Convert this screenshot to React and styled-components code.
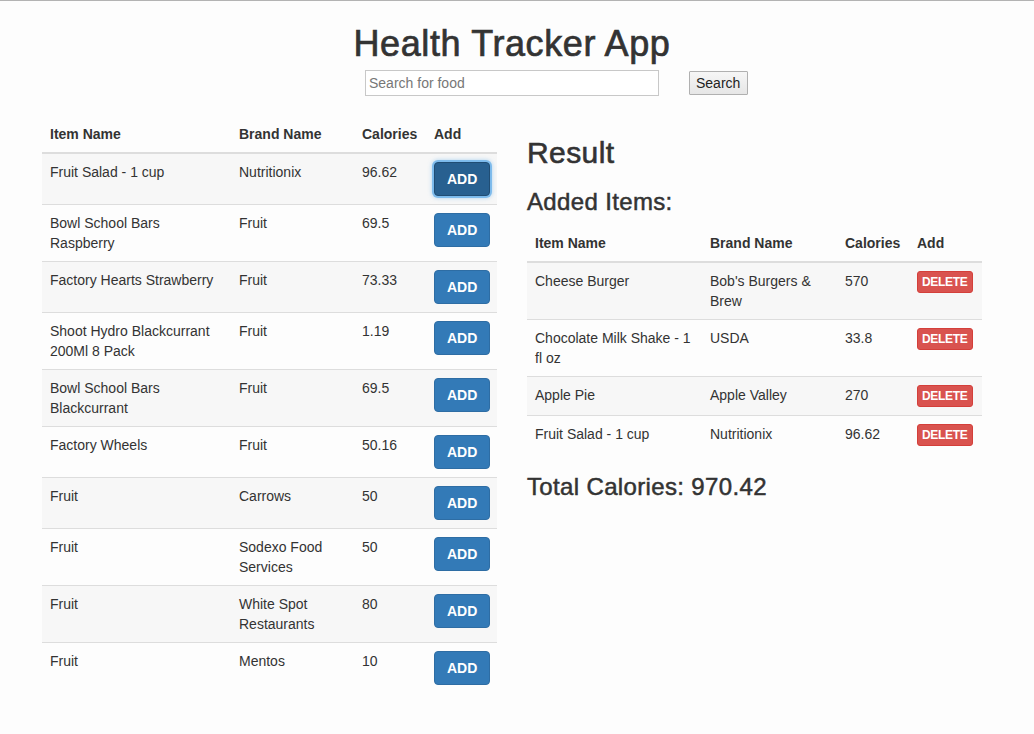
import React from "react";
import styled, { createGlobalStyle } from "styled-components";

const Global = createGlobalStyle`
  html, body { margin: 0; padding: 0; background: #fdfdfd; }
  body {
    font-family: "Liberation Sans", Arial, sans-serif;
    font-size: 14px;
    line-height: 20px;
    color: #333;
    border-top: 1px solid #b3b3b3;
    min-height: 733px;
  }
  * { box-sizing: border-box; }
`;

const Page = styled.div`
  width: 1024px;
`;

const Title = styled.h1`
  margin: 20px 0 6px;
  padding-top: 3px;
  font-size: 36px;
  font-weight: 500;
  line-height: 1.1;
  text-align: center;
  letter-spacing: 0.6px;
  -webkit-text-stroke: 0.7px #333;
`;

const SearchForm = styled.form`
  display: grid;
  grid-template-columns: 1fr 294px 1fr;
  align-items: center;
  margin-bottom: 20px;
`;

const SearchInput = styled.input`
  grid-column: 2;
  height: 26px;
  border: 1px solid #c8c8c8;
  background: #fff;
  padding: 0 3px;
  font-family: "Liberation Sans", Arial, sans-serif;
  font-size: 14px;
  color: #333;
  &::placeholder { color: #777; }
`;

const SearchButton = styled.button`
  grid-column: 3;
  justify-self: start;
  margin-left: 30px;
  height: 24px;
  padding: 0 7px 0 6px;
  border: 1px solid #b0b0b0;
  border-radius: 1px;
  background: linear-gradient(#f6f6f6, #e6e6e6);
  font-family: "Liberation Sans", Arial, sans-serif;
  font-size: 14px;
  color: #222;
`;

const Columns = styled.div`
  display: flex;
  gap: 30px;
  padding-left: 42px;
`;

const Column = styled.div`
  width: 455px;
`;

const H2 = styled.h2`
  margin: 20px 0 10px;
  font-size: 30px;
  font-weight: 500;
  line-height: 1.1;
  letter-spacing: 0.4px;
  -webkit-text-stroke: 0.6px #333;
`;

const H3 = styled.h3`
  margin: 20px 0 10px;
  font-size: 24px;
  font-weight: 500;
  line-height: 1.1;
  letter-spacing: 0.35px;
  -webkit-text-stroke: 0.5px #333;
`;

const Table = styled.table`
  width: 100%;
  border-collapse: collapse;
  border-spacing: 0;
  margin-bottom: 20px;
  table-layout: fixed;
`;

const Th = styled.th`
  text-align: left;
  vertical-align: bottom;
  padding: 8px;
  font-weight: bold;
  border-bottom: 2px solid #ddd;
`;

const Tr = styled.tr`
  background: ${(p) => (p.$odd ? "#f7f7f7" : "transparent")};
`;

const Td = styled.td`
  padding: 8px;
  vertical-align: top;
  border-top: ${(p) => (p.$first ? "none" : "1px solid #ddd")};
`;

const AddButton = styled.button`
  display: block;
  height: 34px;
  padding: 6px 12px;
  border: 1px solid ${(p) => (p.$focused ? "#204d74" : "#2e6da4")};
  border-radius: 4px;
  background: ${(p) => (p.$focused ? "#286090" : "#337ab7")};
  color: #fff;
  font-family: "Liberation Sans", Arial, sans-serif;
  font-size: 14px;
  font-weight: bold;
  line-height: 20px;
  box-shadow: ${(p) =>
    p.$focused ? "0 0 0 2px rgba(102,175,233,0.75), 0 0 4px 2px rgba(102,175,233,0.5)" : "none"};
`;

const DeleteButton = styled.button`
  display: block;
  height: 22px;
  padding: 1px 4px;
  border: 1px solid #d43f3a;
  border-radius: 3px;
  background: #d9534f;
  color: #fff;
  font-family: "Liberation Sans", Arial, sans-serif;
  font-size: 12px;
  font-weight: bold;
  line-height: 18px;
  letter-spacing: -0.3px;
`;

const foods = [
  ["Fruit Salad - 1 cup", "Nutritionix", "96.62"],
  ["Bowl School Bars Raspberry", "Fruit", "69.5"],
  ["Factory Hearts Strawberry", "Fruit", "73.33"],
  ["Shoot Hydro Blackcurrant 200Ml 8 Pack", "Fruit", "1.19"],
  ["Bowl School Bars Blackcurrant", "Fruit", "69.5"],
  ["Factory Wheels", "Fruit", "50.16"],
  ["Fruit", "Carrows", "50"],
  ["Fruit", "Sodexo Food Services", "50"],
  ["Fruit", "White Spot Restaurants", "80"],
  ["Fruit", "Mentos", "10"],
];

const added = [
  ["Cheese Burger", "Bob's Burgers & Brew", "570"],
  ["Chocolate Milk Shake - 1 fl oz", "USDA", "33.8"],
  ["Apple Pie", "Apple Valley", "270"],
  ["Fruit Salad - 1 cup", "Nutritionix", "96.62"],
];

function Head() {
  return (
    <thead>
      <tr>
        <Th>Item Name</Th>
        <Th>Brand Name</Th>
        <Th>Calories</Th>
        <Th>Add</Th>
      </tr>
    </thead>
  );
}

export default function App() {
  return (
    <Page>
      <Global />
      <Title>Health Tracker App</Title>
      <SearchForm onSubmit={(e) => e.preventDefault()}>
        <SearchInput placeholder="Search for food" />
        <SearchButton type="button">Search</SearchButton>
      </SearchForm>
      <Columns>
        <Column>
          <Table>
            <colgroup>
              <col style={{ width: 189 }} />
              <col style={{ width: 123 }} />
              <col style={{ width: 72 }} />
              <col style={{ width: 71 }} />
            </colgroup>
            <Head />
            <tbody>
              {foods.map((f, i) => (
                <Tr key={i} $odd={i % 2 === 0}>
                  <Td $first={i === 0}>{f[0]}</Td>
                  <Td $first={i === 0}>{f[1]}</Td>
                  <Td $first={i === 0}>{f[2]}</Td>
                  <Td $first={i === 0}>
                    <AddButton $focused={i === 0}>ADD</AddButton>
                  </Td>
                </Tr>
              ))}
            </tbody>
          </Table>
        </Column>
        <Column>
          <H2>Result</H2>
          <H3>Added Items:</H3>
          <Table>
            <colgroup>
              <col style={{ width: 175 }} />
              <col style={{ width: 135 }} />
              <col style={{ width: 72 }} />
              <col style={{ width: 73 }} />
            </colgroup>
            <Head />
            <tbody>
              {added.map((f, i) => (
                <Tr key={i} $odd={i % 2 === 0}>
                  <Td $first={i === 0}>{f[0]}</Td>
                  <Td $first={i === 0}>{f[1]}</Td>
                  <Td $first={i === 0}>{f[2]}</Td>
                  <Td $first={i === 0}>
                    <DeleteButton>DELETE</DeleteButton>
                  </Td>
                </Tr>
              ))}
            </tbody>
          </Table>
          <H3>Total Calories: 970.42</H3>
        </Column>
      </Columns>
    </Page>
  );
}
